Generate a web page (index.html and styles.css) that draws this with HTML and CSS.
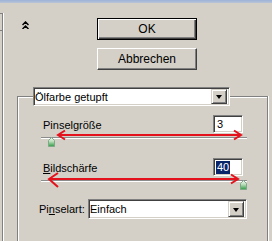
FILE: index.html
```html
<!DOCTYPE html>
<html>
<head>
<meta charset="utf-8">
<link rel="stylesheet" href="styles.css">
</head>
<body>
<div class="window">
  <div class="titlebar"></div>
  <div class="main">
    <div class="edge"><div class="edge-cell"></div></div>
    <div class="content">
      <div class="top">
        <div class="collapse">
          <svg width="7" height="8" viewBox="0 0 7 8"><path d="M0.5 4 L3.5 1 L6.5 4 M0.5 8 L3.5 5 L6.5 8" fill="none" stroke="#000" stroke-width="1.5"/></svg>
        </div>
        <div class="buttons">
          <button class="btn default"><span>OK</span></button>
          <button class="btn"><span>Abbrechen</span></button>
        </div>
      </div>
      <div class="group">
        <div class="combo filter">
          <span class="combo-text">Ölfarbe getupft</span>
          <span class="combo-btn"><span class="tri"></span></span>
        </div>
        <div class="row first">
          <span class="label l1">Pinselgröße</span>
          <span class="field"><span class="val">3</span></span>
        </div>
        <div class="slider">
          <div class="track"></div>
          <svg class="thumb t1" width="7" height="10" viewBox="0 0 7 10"><defs><linearGradient id="g1" x1="0" y1="0" x2="0" y2="1"><stop offset="0" stop-color="#f4f8f2"/><stop offset="0.45" stop-color="#b8dcb8"/><stop offset="1" stop-color="#2f9a45"/></linearGradient></defs><path d="M0.5 3.5 L3.5 0.5 L6.5 3.5 L6.5 9.5 L0.5 9.5 Z" fill="url(#g1)" stroke="#7fa888" stroke-width="1"/></svg>
          <svg class="arrow" width="249" height="30" viewBox="0 0 249 30"><path d="M40 8 L223 8 M47 3.5 L40 8 L47 12.5 M216 3.5 L223 8 L216 12.5" fill="none" stroke="#e4121c" stroke-width="2"/></svg>
        </div>
        <div class="row second">
          <span class="label l1"><u>B</u>ildschärfe</span>
          <span class="field"><span class="val sel">40</span></span>
        </div>
        <div class="slider">
          <div class="track"></div>
          <svg class="thumb t2" width="7" height="10" viewBox="0 0 7 10"><defs><linearGradient id="g2" x1="0" y1="0" x2="0" y2="1"><stop offset="0" stop-color="#f4f8f2"/><stop offset="0.45" stop-color="#b8dcb8"/><stop offset="1" stop-color="#2f9a45"/></linearGradient></defs><path d="M0.5 3.5 L3.5 0.5 L6.5 3.5 L6.5 9.5 L0.5 9.5 Z" fill="url(#g2)" stroke="#7fa888" stroke-width="1"/></svg>
          <svg class="arrow" width="249" height="30" viewBox="0 0 249 30"><path d="M31 9 L220 9 M40 3 L31 9 L40 17 M213 4.5 L220 9 L213 13.5" fill="none" stroke="#e4121c" stroke-width="2"/></svg>
        </div>
        <div class="row third">
          <span class="label l3">Pi<u>n</u>selart:</span>
          <div class="combo kind">
            <span class="combo-text">Einfach</span>
            <span class="combo-btn"><span class="tri"></span></span>
          </div>
        </div>
      </div>
    </div>
  </div>
</div>
</body>
</html>
```
FILE: styles.css
```css
* { box-sizing: border-box; }
html, body { margin: 0; padding: 0; }
body {
  background: #d4d0c8;
  font-family: "Liberation Sans", Arial, sans-serif;
  font-size: 11px;
  color: #000;
}
.window {
  width: 272px;
  height: 241px;
  overflow: hidden;
  background: #d4d0c8;
}
.titlebar {
  height: 3px;
  background: linear-gradient(#9cb2d8, #b9c4d6);
}
.main {
  display: flex;
  height: 238px;
}
.edge {
  width: 3px;
  margin-top: 10px;
  border-top: 1px solid #808080;
  border-right: 1px solid #808080;
  box-shadow: 1px 0 0 #ffffff;
  flex: none;
}
.edge-cell {
  height: 17px;
  border-bottom: 1px solid #808080;
}
.content {
  flex: 1;
  padding-left: 1px;
}
.top {
  display: flex;
  padding-top: 15px;
}
.collapse {
  margin-left: 18px;
  margin-top: 3px;
  width: 7px;
  height: 8px;
  line-height: 0;
}
.buttons {
  margin-left: 68px;
  display: flex;
  flex-direction: column;
  gap: 8px;
}
.btn {
  width: 100px;
  height: 22px;
  padding: 0;
  margin: 0;
  font-family: inherit;
  font-size: 12px;
  color: #000;
  background: #d4d0c8;
  border: 1px solid;
  border-color: #ffffff #404040 #404040 #ffffff;
  box-shadow: inset -1px -1px 0 #808080;
  display: flex;
  align-items: center;
  justify-content: center;
}
.btn.default {
  border: 1px solid #000;
  box-shadow: inset 1px 1px 0 #ffffff, inset -1px -1px 0 #404040, inset -2px -2px 0 #808080;
}
.group {
  margin-top: 26px;
  margin-left: 13px;
  width: 251px;
  height: 200px;
  border: 1px solid #808080;
  box-shadow: inset 1px 1px 0 #ffffff, 1px 0 0 #ffffff;
}
.combo {
  position: relative;
  height: 19px;
  background: #fff;
  border: 1px solid;
  border-color: #808080 #ffffff #ffffff #808080;
  box-shadow: inset 1px 1px 0 #404040, inset -1px -1px 0 #d4d0c8;
  display: flex;
  align-items: center;
}
.combo.filter {
  margin-top: -10px;
  margin-left: 15px;
  width: 197px;
}
.combo-text {
  padding-left: 1px;
  flex: 1;
  white-space: nowrap;
}
.combo-btn {
  width: 16px;
  height: 15px;
  margin-right: 2px;
  background: #d4d0c8;
  border: 1px solid;
  border-color: #d4d0c8 #404040 #404040 #d4d0c8;
  box-shadow: inset 1px 1px 0 #ffffff, inset -1px -1px 0 #808080;
  display: flex;
  align-items: center;
  justify-content: center;
}
.tri {
  width: 0;
  height: 0;
  border-left: 3.5px solid transparent;
  border-right: 3.5px solid transparent;
  border-top: 4px solid #000;
  margin-top: 1px;
}
.row {
  display: flex;
  align-items: center;
  height: 18px;
}
.row.first { margin-top: 9px; }
.row.second { margin-top: 11px; }
.row.third { margin-top: 9px; height: 20px; }
.label.l1 { padding-left: 25px; padding-top: 2px; }
.label.l3 { padding-left: 21px; }
.field {
  margin-left: auto;
  margin-right: 24px;
  width: 30px;
  height: 18px;
  background: #fff;
  border: 1px solid;
  border-color: #808080 #ffffff #ffffff #808080;
  box-shadow: inset 1px 1px 0 #404040, inset -1px -1px 0 #d4d0c8;
  padding-left: 2px;
  display: flex;
  align-items: center;
}
.val { padding: 0 1px; line-height: 13px; }
.val.sel { background: #0a246a; color: #fff; }
.slider {
  position: relative;
  height: 10px;
  margin-top: 4px;
}
.track {
  margin: 4px 20px 0 23px;
  height: 2px;
  border-top: 1px solid #8c8c8c;
  border-bottom: 1px solid #ffffff;
}
.thumb {
  position: absolute;
  top: 0;
}
.thumb.t1 { left: 30px; }
.thumb.t2 { left: 222px; }
.arrow {
  position: absolute;
  left: 0;
  top: -10px;
}
.combo.kind {
  margin-left: auto;
  margin-right: 20px;
  width: 159px;
  height: 20px;
}
.combo.kind .combo-btn { height: 16px; }
```
